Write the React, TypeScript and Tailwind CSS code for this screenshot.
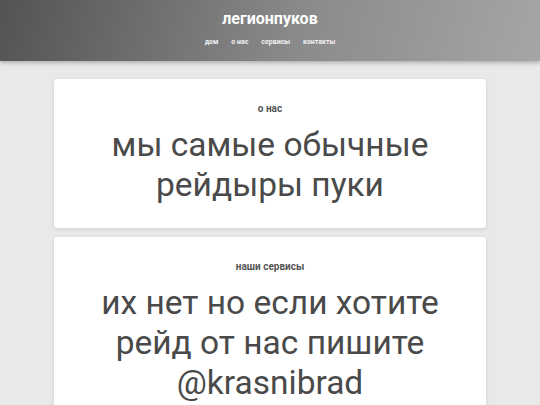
export default function App() {
  const nav = ['дом', 'о нас', 'сервисы', 'контакты']
  return (
    <div className="min-h-[405px] bg-[#e9e9e9] font-['Roboto',sans-serif]">
      <header className="h-[61px] bg-[linear-gradient(105deg,#535353_0%,#8a8a8a_55%,#a6a6a6_100%)] pt-[9px] text-center shadow-[0_2px_4px_rgba(0,0,0,0.25)]">
        <h1 className="text-[16px] font-bold leading-[20px] text-white">легионпуков</h1>
        <nav className="mt-[8px] flex justify-center gap-[13px] text-[7px] font-bold leading-[10px] text-[#f2f2f2]">
          {nav.map((n) => (
            <span key={n}>{n}</span>
          ))}
        </nav>
      </header>
      <main className="mx-auto flex w-[432px] flex-col gap-[9px] pt-[18px]">
        <Card label="о нас" text={['мы самые обычные', 'рейдыры пуки']} />
        <Card label="наши сервисы" text={['их нет но если хотите', 'рейд от нас пишите', '@krasnibrad']} />
      </main>
    </div>
  )
}

function Card({ label, text }: { label: string; text: string[] }) {
  return (
    <section className="rounded-[3px] bg-white px-4 pt-[24px] pb-[23px] text-center shadow-[0_1px_4px_rgba(0,0,0,0.12)]">
      <p className="text-[10px] font-bold leading-[12px] text-[#555]">{label}</p>
      <div className="mt-[10px] text-[33.5px] leading-[40px] text-[#4a4a4a]">
        {text.map((t) => (
          <div key={t}>{t}</div>
        ))}
      </div>
    </section>
  )
}
